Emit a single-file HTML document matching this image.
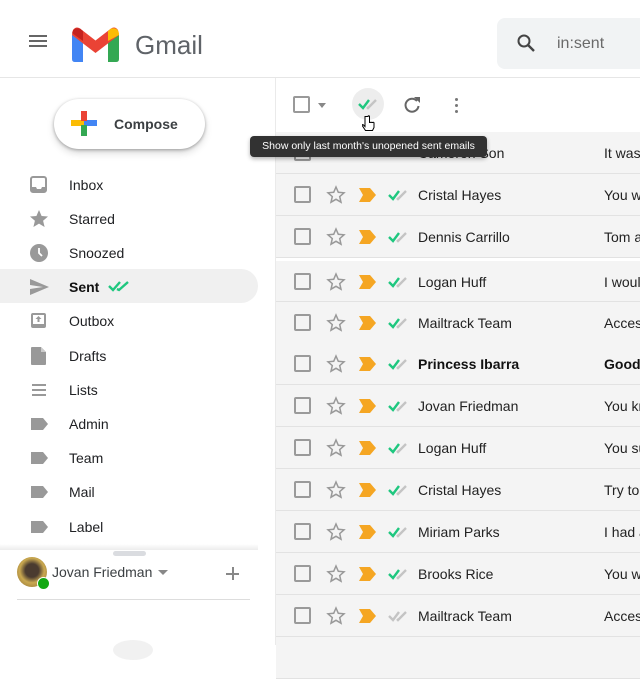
<!DOCTYPE html>
<html><head><meta charset="utf-8"><style>
*{box-sizing:border-box;margin:0;padding:0}
body{width:640px;height:645px;overflow:hidden;background:#fff;font-family:"Liberation Sans",Roboto,sans-serif;position:relative;color:#202124}
.abs{position:absolute}
.nav{position:absolute;left:0;width:258px;height:34px;font-size:14px;color:#202124}
.nav .t{position:absolute;left:69px;top:9px}
.nav svg{position:absolute;left:29px;top:7px}
.row{position:absolute;left:276px;width:364px;height:42px;background:#f4f4f4;border-bottom:1px solid #e2e2e2;font-size:14px;color:#222}
.row .cb{position:absolute;left:18px;top:12px;width:17px;height:17px;border:2px solid #9a9a9a;border-radius:2px}
.row .st{position:absolute;left:50px;top:11px}
.row .lb{position:absolute;left:83px;top:14px}
.row .ck{position:absolute;left:112px;top:15px}
.row .n{position:absolute;left:142px;top:13px}
.row .s{position:absolute;left:328px;top:13px;white-space:nowrap}
.b{font-weight:bold;color:#111}
</style></head><body>
<!-- header -->
<div class="abs" style="left:29px;top:35px;width:18px;height:2px;background:#666;box-shadow:0 5px 0 #666,0 10px 0 #666"></div>
<svg class="abs" style="left:72px;top:27px" width="47" height="35" viewBox="0 0 47 35">
<path d="M0 8 V32 Q0 35 3 35 H11 V11 Z" fill="#4285f4"/>
<path d="M36 11 V35 H44 Q47 35 47 32 V8 Z" fill="#34a853"/>
<path d="M1 3 Q4 -1 8 1.5 L23.5 13.5 L39 1.5 Q43 -1 46 3 L47 8 L23.5 26 L0 8 Z" fill="#ea4335"/>
<path d="M0 8 Q0 0 8 1.5 L11 4 V14 L0 6Z" fill="#c5221f"/>
<path d="M36 4 L39 1.5 Q47 0 47 8 L36 14Z" fill="#fbbc04"/>
</svg>
<div class="abs" style="left:135px;top:30px;font-size:26px;color:#5f6368">Gmail</div>
<div class="abs" style="left:497px;top:18px;width:160px;height:51px;background:#f1f3f4;border-radius:8px"></div>
<svg class="abs" style="left:516px;top:33px" width="20" height="20" viewBox="0 0 20 20"><circle cx="8" cy="8" r="5.5" fill="none" stroke="#444" stroke-width="2"/><path d="M12 12 L18 18" stroke="#444" stroke-width="2.4"/></svg>
<div class="abs" style="left:557px;top:35px;font-size:16px;color:#6a6a6a">in:sent</div>
<div class="abs" style="left:0;top:77px;width:640px;height:1px;background:#e6e6e6"></div>
<div class="abs" style="left:275px;top:78px;width:1px;height:567px;background:#eaeaea"></div>
<!-- compose -->
<div class="abs" style="left:54px;top:99px;width:151px;height:50px;border-radius:25px;background:#fff;box-shadow:0 1px 3px rgba(0,0,0,.3),0 4px 8px rgba(0,0,0,.15)"></div>
<div class="abs" style="left:71px;top:120px;width:13px;height:6px;background:#fbbc04"></div>
<div class="abs" style="left:84px;top:120px;width:13px;height:6px;background:#4285f4"></div>
<div class="abs" style="left:81px;top:111px;width:6px;height:10px;background:#ea4335"></div>
<div class="abs" style="left:81px;top:125px;width:6px;height:11px;background:#34a853"></div>
<div class="abs" style="left:114px;top:116px;font-size:14px;font-weight:bold;color:#3c4043">Compose</div>
<!-- nav -->
<div class="abs" style="left:0;top:269px;width:258px;height:34px;background:#f0f0f0;border-radius:0 17px 17px 0"></div>
<div class="nav" style="top:168px"><svg width="20" height="20"><rect x="2" y="2" width="15" height="15" rx="2" fill="none" stroke="#999" stroke-width="2"/><path d="M3 12h4l1 2h4l1-2h4v5H3z" fill="#999"/></svg><span class="t">Inbox</span></div>
<div class="nav" style="top:202px"><svg width="20" height="20"><path d="M10 1l2.6 6 6.4.5-4.9 4.2 1.5 6.3L10 14.6 4.4 18l1.5-6.3L1 7.5 7.4 7z" fill="#999"/></svg><span class="t">Starred</span></div>
<div class="nav" style="top:236px"><svg width="20" height="20"><circle cx="10" cy="10" r="9" fill="#999"/><path d="M10 5v5l3 3" stroke="#fff" stroke-width="1.8" fill="none"/></svg><span class="t">Snoozed</span></div>
<div class="nav" style="top:270px"><svg width="20" height="20"><path d="M1 2l19 8-19 8v-6l13-2-13-2z" fill="#999"/></svg><span class="t b">Sent</span>
<svg style="left:108px;top:11px" width="22" height="12"><path d="M1 5l4 4 7-8M9 8l2 1 9-8" stroke="#1fc77f" stroke-width="2.4" fill="none"/></svg></div>
<div class="nav" style="top:304px"><svg width="20" height="20"><rect x="2" y="2" width="15" height="15" rx="2" fill="#999"/><rect x="4" y="4" width="11" height="9" fill="#fff"/><path d="M9.5 5l-3 3h2v3h2V8h2z" fill="#999"/></svg><span class="t">Outbox</span></div>
<div class="nav" style="top:339px"><svg width="20" height="20"><path d="M3 1h9l5 5v12a1 1 0 0 1-1 1H3a1 1 0 0 1-1-1V2a1 1 0 0 1 1-1z" fill="#999"/><path d="M12 1v5h5" fill="#ccc"/></svg><span class="t">Drafts</span></div>
<div class="nav" style="top:373px"><svg width="20" height="20"><path d="M3 5h14M3 10h14M3 15h14" stroke="#999" stroke-width="2"/></svg><span class="t">Lists</span></div>
<div class="nav" style="top:407px"><svg width="20" height="20"><path d="M2 4h12l5 6-5 6H2z" fill="#999"/></svg><span class="t">Admin</span></div>
<div class="nav" style="top:441px"><svg width="20" height="20"><path d="M2 4h12l5 6-5 6H2z" fill="#999"/></svg><span class="t">Team</span></div>
<div class="nav" style="top:475px"><svg width="20" height="20"><path d="M2 4h12l5 6-5 6H2z" fill="#999"/></svg><span class="t">Mail</span></div>
<div class="nav" style="top:510px"><svg width="20" height="20"><path d="M2 4h12l5 6-5 6H2z" fill="#999"/></svg><span class="t">Label</span></div>
<!-- bottom -->
<div class="abs" style="left:0;top:544px;width:258px;height:6px;background:linear-gradient(#fff,#ececec)"></div>
<div class="abs" style="left:113px;top:551px;width:33px;height:5px;border-radius:3px;background:#dadce0"></div>
<div class="abs" style="left:17px;top:557px;width:30px;height:30px;border-radius:50%;background:radial-gradient(circle at 50% 45%,#4a3b30 0 30%,#c9a850 55%,#8a6a30)"></div>
<div class="abs" style="left:37px;top:577px;width:13px;height:13px;border-radius:50%;background:#12a812;border:1px solid #fff"></div>
<div class="abs" style="left:52px;top:564px;font-size:14px;color:#3c4043">Jovan Friedman</div>
<div class="abs" style="left:158px;top:570px;border:5px solid transparent;border-top-color:#888"></div>
<div class="abs" style="left:226px;top:573px;width:13px;height:1.5px;background:#888"></div>
<div class="abs" style="left:232px;top:567px;width:1.5px;height:13px;background:#888"></div>
<div class="abs" style="left:17px;top:599px;width:233px;height:1px;background:#ddd"></div>
<div class="abs" style="left:113px;top:640px;width:40px;height:20px;border-radius:50%;background:#f1f1f1"></div>
<!-- toolbar -->
<div class="abs" style="left:293px;top:96px;width:17px;height:17px;border:2px solid #999;border-radius:2px"></div>
<div class="abs" style="left:318px;top:103px;border:4px solid transparent;border-top:5px solid #888"></div>
<div class="abs" style="left:352px;top:88px;width:32px;height:32px;border-radius:50%;background:#ededed"></div>
<svg class="abs" style="left:358px;top:98px" width="22" height="12"><path d="M1 6l4 4 6-8" stroke="#1fc77f" stroke-width="2.4" fill="none"/><path d="M9 9l1 1 8-8" stroke="#c4c4c4" stroke-width="2.4" fill="none"/></svg>
<svg class="abs" style="left:402px;top:95px" width="20" height="20"><path d="M15 6a6.5 6.5 0 1 0 1.5 5" stroke="#666" stroke-width="2" fill="none"/><path d="M12 2h6v6z" fill="#666"/></svg>
<div class="abs" style="left:455px;top:98px;width:3px;height:3px;border-radius:50%;background:#777;box-shadow:0 6px 0 #777,0 12px 0 #777"></div>
<!-- rows -->
<div class="row" style="top:132px"><div class="cb"></div><div class="n">Cameron Son</div><div class="s">It was</div></div>
<div class="row" style="top:174px"><div class="cb"></div><svg class="st" width="20" height="20"><path d="M10 2l2.3 5.3 5.7.5-4.3 3.8 1.3 5.6L10 14.3 5 17.2l1.3-5.6L2 7.8l5.7-.5z" fill="none" stroke="#999" stroke-width="1.5"/></svg><svg class="lb" width="17" height="14"><path d="M0 0h11l6 7-6 7H0l4-7z" fill="#f5a623"/></svg><svg class="ck" width="22" height="12"><path d="M1 6l4 4 6-8" stroke="#1fc77f" stroke-width="2.4" fill="none"/><path d="M9 9l1 1 8-8" stroke="#c4c4c4" stroke-width="2.4" fill="none"/></svg><div class="n">Cristal Hayes</div><div class="s">You w</div></div>
<div class="row" style="top:216px"><div class="cb"></div><svg class="st" width="20" height="20"><path d="M10 2l2.3 5.3 5.7.5-4.3 3.8 1.3 5.6L10 14.3 5 17.2l1.3-5.6L2 7.8l5.7-.5z" fill="none" stroke="#999" stroke-width="1.5"/></svg><svg class="lb" width="17" height="14"><path d="M0 0h11l6 7-6 7H0l4-7z" fill="#f5a623"/></svg><svg class="ck" width="22" height="12"><path d="M1 6l4 4 6-8" stroke="#1fc77f" stroke-width="2.4" fill="none"/><path d="M9 9l1 1 8-8" stroke="#c4c4c4" stroke-width="2.4" fill="none"/></svg><div class="n">Dennis Carrillo</div><div class="s">Tom a</div></div>
<div class="row" style="top:259px;height:43px;border-top:2px solid #fff"><div class="cb"></div><svg class="st" width="20" height="20"><path d="M10 2l2.3 5.3 5.7.5-4.3 3.8 1.3 5.6L10 14.3 5 17.2l1.3-5.6L2 7.8l5.7-.5z" fill="none" stroke="#999" stroke-width="1.5"/></svg><svg class="lb" width="17" height="14"><path d="M0 0h11l6 7-6 7H0l4-7z" fill="#f5a623"/></svg><svg class="ck" width="22" height="12"><path d="M1 6l4 4 6-8" stroke="#1fc77f" stroke-width="2.4" fill="none"/><path d="M9 9l1 1 8-8" stroke="#c4c4c4" stroke-width="2.4" fill="none"/></svg><div class="n">Logan Huff</div><div class="s">I woul</div></div>
<div class="row" style="top:302px"><div class="cb"></div><svg class="st" width="20" height="20"><path d="M10 2l2.3 5.3 5.7.5-4.3 3.8 1.3 5.6L10 14.3 5 17.2l1.3-5.6L2 7.8l5.7-.5z" fill="none" stroke="#999" stroke-width="1.5"/></svg><svg class="lb" width="17" height="14"><path d="M0 0h11l6 7-6 7H0l4-7z" fill="#f5a623"/></svg><svg class="ck" width="22" height="12"><path d="M1 6l4 4 6-8" stroke="#1fc77f" stroke-width="2.4" fill="none"/><path d="M9 9l1 1 8-8" stroke="#c4c4c4" stroke-width="2.4" fill="none"/></svg><div class="n">Mailtrack Team</div><div class="s">Acces</div></div>
<div class="row" style="top:343px"><div class="cb"></div><svg class="st" width="20" height="20"><path d="M10 2l2.3 5.3 5.7.5-4.3 3.8 1.3 5.6L10 14.3 5 17.2l1.3-5.6L2 7.8l5.7-.5z" fill="none" stroke="#999" stroke-width="1.5"/></svg><svg class="lb" width="17" height="14"><path d="M0 0h11l6 7-6 7H0l4-7z" fill="#f5a623"/></svg><svg class="ck" width="22" height="12"><path d="M1 6l4 4 6-8" stroke="#1fc77f" stroke-width="2.4" fill="none"/><path d="M9 9l1 1 8-8" stroke="#c4c4c4" stroke-width="2.4" fill="none"/></svg><div class="n b">Princess Ibarra</div><div class="s b">Good</div></div>
<div class="row" style="top:385px"><div class="cb"></div><svg class="st" width="20" height="20"><path d="M10 2l2.3 5.3 5.7.5-4.3 3.8 1.3 5.6L10 14.3 5 17.2l1.3-5.6L2 7.8l5.7-.5z" fill="none" stroke="#999" stroke-width="1.5"/></svg><svg class="lb" width="17" height="14"><path d="M0 0h11l6 7-6 7H0l4-7z" fill="#f5a623"/></svg><svg class="ck" width="22" height="12"><path d="M1 6l4 4 6-8" stroke="#1fc77f" stroke-width="2.4" fill="none"/><path d="M9 9l1 1 8-8" stroke="#c4c4c4" stroke-width="2.4" fill="none"/></svg><div class="n">Jovan Friedman</div><div class="s">You kn</div></div>
<div class="row" style="top:427px"><div class="cb"></div><svg class="st" width="20" height="20"><path d="M10 2l2.3 5.3 5.7.5-4.3 3.8 1.3 5.6L10 14.3 5 17.2l1.3-5.6L2 7.8l5.7-.5z" fill="none" stroke="#999" stroke-width="1.5"/></svg><svg class="lb" width="17" height="14"><path d="M0 0h11l6 7-6 7H0l4-7z" fill="#f5a623"/></svg><svg class="ck" width="22" height="12"><path d="M1 6l4 4 6-8" stroke="#1fc77f" stroke-width="2.4" fill="none"/><path d="M9 9l1 1 8-8" stroke="#c4c4c4" stroke-width="2.4" fill="none"/></svg><div class="n">Logan Huff</div><div class="s">You su</div></div>
<div class="row" style="top:469px"><div class="cb"></div><svg class="st" width="20" height="20"><path d="M10 2l2.3 5.3 5.7.5-4.3 3.8 1.3 5.6L10 14.3 5 17.2l1.3-5.6L2 7.8l5.7-.5z" fill="none" stroke="#999" stroke-width="1.5"/></svg><svg class="lb" width="17" height="14"><path d="M0 0h11l6 7-6 7H0l4-7z" fill="#f5a623"/></svg><svg class="ck" width="22" height="12"><path d="M1 6l4 4 6-8" stroke="#1fc77f" stroke-width="2.4" fill="none"/><path d="M9 9l1 1 8-8" stroke="#c4c4c4" stroke-width="2.4" fill="none"/></svg><div class="n">Cristal Hayes</div><div class="s">Try to</div></div>
<div class="row" style="top:511px"><div class="cb"></div><svg class="st" width="20" height="20"><path d="M10 2l2.3 5.3 5.7.5-4.3 3.8 1.3 5.6L10 14.3 5 17.2l1.3-5.6L2 7.8l5.7-.5z" fill="none" stroke="#999" stroke-width="1.5"/></svg><svg class="lb" width="17" height="14"><path d="M0 0h11l6 7-6 7H0l4-7z" fill="#f5a623"/></svg><svg class="ck" width="22" height="12"><path d="M1 6l4 4 6-8" stroke="#1fc77f" stroke-width="2.4" fill="none"/><path d="M9 9l1 1 8-8" stroke="#c4c4c4" stroke-width="2.4" fill="none"/></svg><div class="n">Miriam Parks</div><div class="s">I had a</div></div>
<div class="row" style="top:553px"><div class="cb"></div><svg class="st" width="20" height="20"><path d="M10 2l2.3 5.3 5.7.5-4.3 3.8 1.3 5.6L10 14.3 5 17.2l1.3-5.6L2 7.8l5.7-.5z" fill="none" stroke="#999" stroke-width="1.5"/></svg><svg class="lb" width="17" height="14"><path d="M0 0h11l6 7-6 7H0l4-7z" fill="#f5a623"/></svg><svg class="ck" width="22" height="12"><path d="M1 6l4 4 6-8" stroke="#1fc77f" stroke-width="2.4" fill="none"/><path d="M9 9l1 1 8-8" stroke="#c4c4c4" stroke-width="2.4" fill="none"/></svg><div class="n">Brooks Rice</div><div class="s">You w</div></div>
<div class="row" style="top:595px"><div class="cb"></div><svg class="st" width="20" height="20"><path d="M10 2l2.3 5.3 5.7.5-4.3 3.8 1.3 5.6L10 14.3 5 17.2l1.3-5.6L2 7.8l5.7-.5z" fill="none" stroke="#999" stroke-width="1.5"/></svg><svg class="lb" width="17" height="14"><path d="M0 0h11l6 7-6 7H0l4-7z" fill="#f5a623"/></svg><svg class="ck" width="22" height="12"><path d="M1 6l4 4 6-8" stroke="#c4c4c4" stroke-width="2.4" fill="none"/><path d="M9 9l1 1 8-8" stroke="#c4c4c4" stroke-width="2.4" fill="none"/></svg><div class="n">Mailtrack Team</div><div class="s">Acces</div></div>
<div class="row" style="top:637px"></div>
<!-- tooltip -->
<div class="abs" style="left:250px;top:136px;width:237px;height:21px;background:#323232;border-radius:4px;color:#fff;font-size:10.5px;line-height:21px;text-align:center;white-space:nowrap;box-shadow:0 2px 4px rgba(0,0,0,.3)">Show only last month's unopened sent emails</div>
<svg class="abs" style="left:362px;top:115px" width="14" height="18"><path d="M3 1.5v10l-1.5-1.5c-1-1-2 0-1 1l3 4.5h7l1.5-3v-4.5c0-1-1.5-1-1.5 0 0-1-1.5-1-1.5 0 0-1-1.5-1-1.5 0V1.5c0-1-1.5-1-1.5 0z" fill="#fff" stroke="#000" stroke-width="1"/></svg>
</body></html>
